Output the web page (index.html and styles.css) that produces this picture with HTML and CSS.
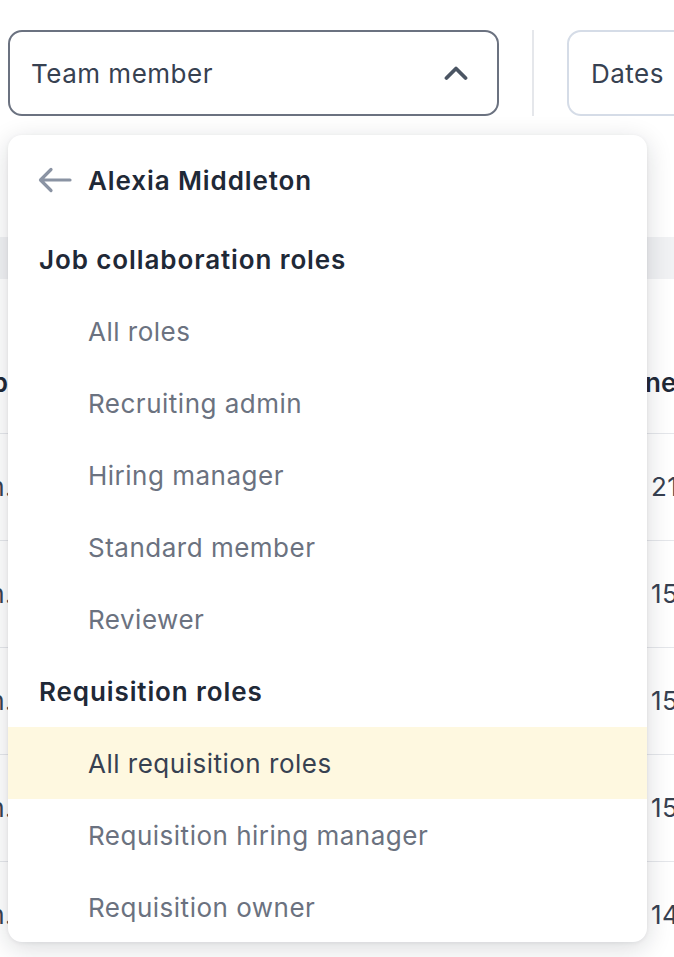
FILE: index.html
```html
<!DOCTYPE html>
<html lang="en">
<head>
<meta charset="utf-8">
<title>Team member filter</title>
<link rel="stylesheet" href="styles.css">
</head>
<body>
<div class="page">
  <div class="toolbar">
    <div class="select">
      <span class="select-label">Team member</span>
      <svg class="chevron" width="24" height="16" viewBox="0 0 24 16"><path d="M2.5 13 L12 3.5 L21.5 13" fill="none" stroke="#4b5563" stroke-width="3.8" stroke-linecap="round" stroke-linejoin="round"/></svg>
    </div>
    <div class="divider"></div>
    <div class="dates">Dates</div>
  </div>

  <div class="table">
    <div class="band"></div>
    <div class="thead">
      <div class="cell-left bold">Job</div>
      <div class="spacer"></div>
      <div class="cell-right bold head-right">ne</div>
    </div>
    <div class="row"><div class="cell-left">Admin.</div><div class="spacer"></div><div class="cell-right">21</div></div>
    <div class="row"><div class="cell-left">Admin.</div><div class="spacer"></div><div class="cell-right">15</div></div>
    <div class="row"><div class="cell-left">Admin.</div><div class="spacer"></div><div class="cell-right">15</div></div>
    <div class="row"><div class="cell-left">Admin.</div><div class="spacer"></div><div class="cell-right">15</div></div>
    <div class="row"><div class="cell-left">Admin.</div><div class="spacer"></div><div class="cell-right">14</div></div>
  </div>

  <div class="menu">
    <div class="back">
      <svg class="arrow" width="34" height="26" viewBox="0 0 34 26"><path d="M32 13 H3 M13 2.5 L2.5 13 L13 23.5" fill="none" stroke="#8a93a3" stroke-width="3.2" stroke-linecap="round" stroke-linejoin="round"/></svg>
      <span class="back-name">Alexia Middleton</span>
    </div>
    <div class="group">Job collaboration roles</div>
    <div class="item">All roles</div>
    <div class="item">Recruiting admin</div>
    <div class="item">Hiring manager</div>
    <div class="item">Standard member</div>
    <div class="item">Reviewer</div>
    <div class="group">Requisition roles</div>
    <div class="item active">All requisition roles</div>
    <div class="item">Requisition hiring manager</div>
    <div class="item">Requisition owner</div>
  </div>
</div>
</body>
</html>
```

FILE: styles.css
```css
* { box-sizing: border-box; }

html, body {
  margin: 0;
  padding: 0;
  background: #ffffff;
}

body {
  font-family: Inter, "Noto Sans", "Liberation Sans", sans-serif;
  color: #374151;
  overflow: hidden;
}

.page {
  position: relative;
  width: 674px;
  height: 957px;
  overflow: hidden;
}

.toolbar {
  display: flex;
  align-items: stretch;
  height: 86px;
  margin-top: 30px;
  padding-left: 8px;
}

.select {
  width: 491px;
  flex: none;
  border: 2px solid #6b7280;
  border-radius: 14px;
  display: flex;
  align-items: center;
  justify-content: space-between;
  padding: 0 29px 0 21px;
  font-size: 26px;
  letter-spacing: 0.5px;
  color: #374151;
}

.chevron { display: block; }

.divider {
  width: 2px;
  flex: none;
  background: #e5e7eb;
  margin: 0 33px;
}

.dates {
  width: 220px;
  flex: none;
  border: 2px solid #d5dce7;
  border-radius: 14px;
  display: flex;
  align-items: center;
  padding-left: 22px;
  font-size: 26px;
  letter-spacing: 0.5px;
  color: #374151;
}

.table {
  margin-top: 121px;
}

.band {
  height: 42px;
  background: #f1f2f4;
}

.thead {
  height: 154px;
  display: flex;
  align-items: flex-end;
  padding-bottom: 34px;
  font-size: 26px;
  line-height: 32px;
}

.row {
  height: 107px;
  border-top: 1px solid #e5e7eb;
  display: flex;
  align-items: center;
  font-size: 26px;
  letter-spacing: 0.5px;
  line-height: 32px;
  color: #374151;
}

.cell-left {
  width: 8px;
  flex: none;
  overflow: hidden;
  display: flex;
  justify-content: flex-end;
  white-space: nowrap;
}

.row .cell-left { width: 13px; }

.spacer { flex: 1; }

.cell-right {
  width: 23px;
  flex: none;
  white-space: nowrap;
  overflow: hidden;
}

.head-right { text-indent: -6px; overflow: visible; }

.bold {
  font-weight: 600;
  color: #1f2937;
}

.menu {
  position: absolute;
  top: 135px;
  left: 8px;
  width: 639px;
  height: 807px;
  background: #ffffff;
  border-radius: 14px;
  box-shadow: 0 6px 26px rgba(17, 24, 39, 0.16), 0 1px 4px rgba(17, 24, 39, 0.06);
  padding-top: 9px;
  overflow: hidden;
}

.back {
  height: 72px;
  display: flex;
  align-items: center;
  gap: 16px;
  padding-left: 30px;
  margin-bottom: 7px;
}

.arrow { display: block; }

.back-name {
  font-size: 26px;
  font-weight: 600;
  letter-spacing: 0.9px;
  color: #1f2937;
}

.group {
  height: 72px;
  display: flex;
  align-items: center;
  padding-left: 31px;
  font-size: 26px;
  font-weight: 600;
  letter-spacing: 0.9px;
  color: #1f2937;
}

.item {
  height: 72px;
  display: flex;
  align-items: center;
  padding-left: 80px;
  font-size: 26px;
  letter-spacing: 0.5px;
  color: #6b7280;
}

.item.active {
  background: #fef8e0;
  color: #374151;
}
```
